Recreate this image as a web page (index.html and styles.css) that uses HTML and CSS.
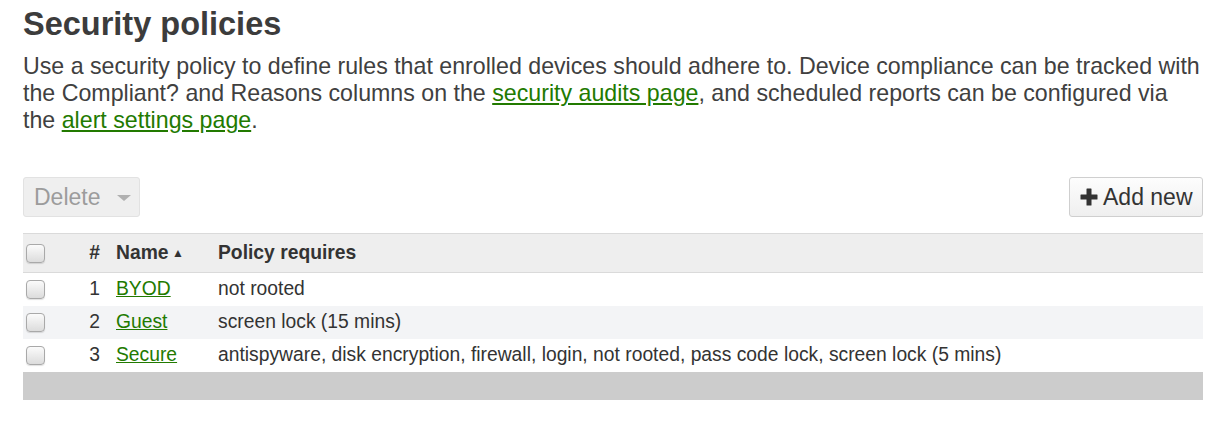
FILE: index.html
```html
<!DOCTYPE html>
<html>
<head>
<meta charset="utf-8">
<link rel="stylesheet" href="styles.css">
</head>
<body>
<div class="page">
  <h1 class="title">Security policies</h1>
  <p class="intro">Use a security policy to define rules that enrolled devices should adhere to. Device compliance can be tracked with the Compliant? and Reasons columns on the <a href="#">security audits page</a>, and scheduled reports can be configured via the <a href="#">alert settings page</a>.</p>

  <div class="toolbar">
    <button class="btn btn-disabled">Delete <span class="caret"></span></button>
    <button class="btn btn-add"><svg class="plus" width="18" height="18" viewBox="0 0 18 18"><rect x="6.5" y="0.5" width="5" height="17" rx="0.5" fill="#333"/><rect x="0.5" y="6.5" width="17" height="5" rx="0.5" fill="#333"/></svg><span>Add new</span></button>
  </div>

  <table class="grid">
    <colgroup>
      <col class="c-check"><col class="c-num"><col class="c-name"><col class="c-pol">
    </colgroup>
    <thead>
      <tr>
        <th class="cell-check"><span class="cb"></span></th>
        <th class="cell-num">#</th>
        <th class="cell-name">Name <span class="sort">▲</span></th>
        <th class="cell-pol">Policy requires</th>
      </tr>
    </thead>
    <tbody>
      <tr>
        <td class="cell-check"><span class="cb"></span></td>
        <td class="cell-num">1</td>
        <td class="cell-name"><a href="#">BYOD</a></td>
        <td class="cell-pol">not rooted</td>
      </tr>
      <tr class="alt">
        <td class="cell-check"><span class="cb"></span></td>
        <td class="cell-num">2</td>
        <td class="cell-name"><a href="#">Guest</a></td>
        <td class="cell-pol">screen lock (15 mins)</td>
      </tr>
      <tr>
        <td class="cell-check"><span class="cb"></span></td>
        <td class="cell-num">3</td>
        <td class="cell-name"><a href="#">Secure</a></td>
        <td class="cell-pol">antispyware, disk encryption, firewall, login, not rooted, pass code lock, screen lock (5 mins)</td>
      </tr>
    </tbody>
    <tfoot>
      <tr><td colspan="4" class="foot"></td></tr>
    </tfoot>
  </table>
</div>
</body>
</html>
```
FILE: styles.css
```css
html, body {
  margin: 0;
  padding: 0;
  background: #fff;
}
body {
  font-family: "Liberation Sans", Arial, Helvetica, sans-serif;
  color: #404040;
}
.page {
  padding: 5px 21px 0 23px;
}
.title {
  margin: 0;
  font-size: 32.5px;
  line-height: 38px;
  font-weight: bold;
  color: #3c3c3c;
}
.intro {
  margin: 10px 0 0 0;
  font-size: 23.2px;
  line-height: 27px;
  color: #404040;
}
.intro a, .grid a {
  color: #227a00;
  text-decoration: underline;
}
.toolbar {
  margin-top: 43px;
  display: flex;
  justify-content: space-between;
  align-items: center;
}
.btn {
  height: 40px;
  box-sizing: border-box;
  font-family: "Liberation Sans", Arial, Helvetica, sans-serif;
  font-size: 23px;
  border-radius: 3px;
  display: flex;
  align-items: center;
  padding: 0 10px;
  white-space: nowrap;
  cursor: pointer;
}
.btn-disabled {
  width: 117px;
  background: #efefef;
  border: 1px solid #e2e2e2;
  color: #9c9c9c;
}
.caret {
  display: inline-block;
  width: 0;
  height: 0;
  margin-left: 17px;
  margin-top: 2px;
  border-left: 7px solid transparent;
  border-right: 7px solid transparent;
  border-top: 6px solid #b0b0b0;
}
.btn-add {
  width: 134px;
  background: linear-gradient(#fdfdfd, #efefef);
  border: 1px solid #cfcfcf;
  color: #333;
  padding: 0 0 0 10px;
}
.plus {
  margin-right: 5px;
  flex: none;
}
.grid {
  margin-top: 16px;
  width: 100%;
  border-collapse: collapse;
  table-layout: fixed;
  font-size: 19.3px;
  color: #333;
}
.c-check { width: 55px; }
.c-num { width: 30px; }
.c-name { width: 102px; }
.grid th, .grid td {
  padding: 0;
  vertical-align: middle;
  text-align: left;
  white-space: nowrap;
}
.grid thead tr {
  height: 39px;
  background: #eeeeee;
  border-top: 1px solid #dadada;
  border-bottom: 1px solid #dadada;
}
.grid th {
  font-weight: bold;
}
.grid tbody tr {
  height: 33px;
}
.grid tbody tr.alt {
  background: #f3f4f6;
}
.cell-check {
  padding-left: 3px !important;
}
.cell-num {
  text-align: right !important;
  padding-right: 8px !important;
}
.cell-name, .cell-pol {
  padding-left: 8px !important;
}
.cb {
  display: block;
  width: 19px;
  height: 19px;
  box-sizing: border-box;
  border: 1px solid #a9a9a9;
  border-radius: 4px;
  background: linear-gradient(#fbfbfb, #dcdcdc);
  box-shadow: 0 1px 1px rgba(0,0,0,0.12);
}
.sort {
  font-size: 12px;
  vertical-align: 2px;
  margin-left: -2px;
  color: #333;
}
.foot {
  height: 28px;
  background: #cccccc;
}
```
